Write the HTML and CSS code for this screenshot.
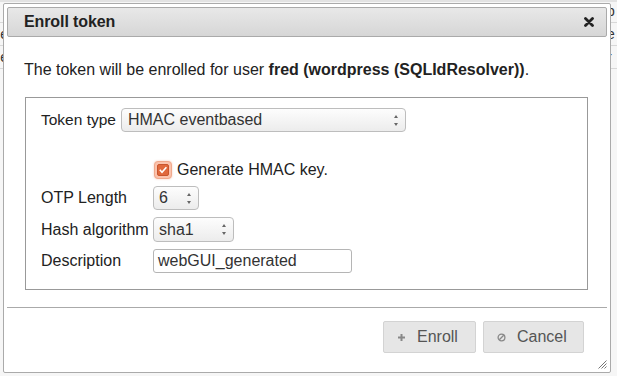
FILE: index.html
```html
<!DOCTYPE html>
<html lang="en">
  <head>
    <meta charset="UTF-8" />
    <title>Enroll token</title>
    <link rel="stylesheet" href="styles.css">
  </head>
  <body>
    <div class="backdrop">
      <div class="bg-row bg-top"><span class="bg-mid"></span><span class="bg-end">b</span></div>
      <div class="bg-row"><span class="bg-left">e</span><span class="bg-mid"></span><span class="bg-end">e</span></div>
      <div class="bg-row"><span class="bg-left">e</span><span class="bg-mid"></span><span class="bg-end">r</span></div>
    </div>

    <div class="dialog">
      <div class="titlebar">
        <span class="title">Enroll token</span>
        <button class="close" title="close">
          <svg width="10" height="10" viewBox="0 0 10 10">
            <path d="M1.5 1.5 L8.5 8.5 M8.5 1.5 L1.5 8.5" stroke="#222" stroke-width="2.8" stroke-linecap="round" />
          </svg>
        </button>
      </div>

      <div class="content">
        <p class="message">
          The token will be enrolled for user <b>fred (wordpress (SQLIdResolver))</b>.
        </p>

        <fieldset class="token-form">
          <div class="type-row">
            <label>Token type</label>
            <div class="select select-type">
              <span>HMAC eventbased</span>
              <span class="arrows"></span>
            </div>
          </div>

          <div class="form-grid">
            <span></span>
            <label class="check">
              <span class="box">
                <svg width="12" height="12" viewBox="0 0 12 12">
                  <rect x="0.5" y="0.5" width="11" height="11" rx="1.5" fill="#e0693d" stroke="#c9552d" />
                  <path d="M2.8 5.8 L5 8.2 L9.4 3.2" fill="none" stroke="#fff" stroke-width="1.6" />
                </svg>
              </span>
              Generate HMAC key.
            </label>

            <label>OTP Length</label>
            <div class="select select-otp">
              <span>6</span>
              <span class="arrows"></span>
            </div>

            <label>Hash algorithm</label>
            <div class="select select-hash">
              <span>sha1</span>
              <span class="arrows"></span>
            </div>

            <label>Description</label>
            <div class="text-input">webGUI_generated</div>
          </div>
        </fieldset>
      </div>

      <div class="buttonpane">
        <button class="btn">
          <svg class="btn-icon" width="9" height="9" viewBox="0 0 9 9">
            <path d="M4.5 1 V8 M1 4.5 H8" stroke="#888" stroke-width="2" />
          </svg>
          Enroll
        </button>
        <button class="btn btn-cancel">
          <svg class="btn-icon" width="9" height="9" viewBox="0 0 9 9">
            <circle cx="4.5" cy="4.5" r="3.4" fill="none" stroke="#888" stroke-width="1.3" />
            <path d="M2.3 6.7 L6.7 2.3" stroke="#888" stroke-width="1.3" />
          </svg>
          Cancel
        </button>
      </div>

      <svg class="resize" width="10" height="10" viewBox="0 0 10 10">
        <path d="M9.5 1.5 L1.5 9.5 M9.5 4.5 L4.5 9.5 M9.5 7.5 L7.5 9.5" stroke="#666" stroke-width="0.9" />
      </svg>
    </div>
  </body>
</html>
```

FILE: styles.css
```css
body {
  margin: 0;
  width: 617px;
  height: 376px;
  overflow: hidden;
  position: relative;
  background-color: #f6f6f6;
  font-family: "Liberation Sans", Arial, sans-serif;
  color: #222;
}

/* page behind the dialog */
.bg-row {
  display: flex;
  height: 22px;
  border-bottom: 1px solid #d8d8d8;
  font-size: 14px;
  line-height: 22px;
  color: #333;
}
.bg-top {
  height: 20px;
  border-top: 2px solid #e2e2e2;
  line-height: 18px;
}
.bg-left {
  width: 8px;
  text-align: right;
}
.bg-mid {
  flex: 1;
}
.bg-end {
  width: 10px;
}

/* dialog */
.dialog {
  position: absolute;
  left: 3px;
  top: 3px;
  width: 608px;
  height: 370px;
  box-sizing: border-box;
  padding: 3px;
  border: 1px solid #aaa;
  border-radius: 2px;
  background: #fff;
  display: flex;
  flex-direction: column;
}

.titlebar {
  height: 30px;
  box-sizing: border-box;
  border: 1px solid #aaa;
  border-radius: 2px;
  background: linear-gradient(#e8e8e8, #d6d6d6);
  display: flex;
  align-items: center;
  justify-content: space-between;
  padding: 0 12px 0 16px;
}
.title {
  font-size: 16px;
  font-weight: bold;
  letter-spacing: -0.1px;
}
.close {
  border: none;
  background: none;
  padding: 0;
  width: 10px;
  height: 10px;
  display: flex;
}

.content {
  flex: 1;
  padding: 0 17px;
}
.message {
  margin: 24px 0 0 0;
  font-size: 16px;
  line-height: 18px;
}

.token-form {
  margin: 18px 0 0 1px;
  width: 563px;
  height: 193px;
  box-sizing: border-box;
  border: 1px solid #999;
  padding: 10px 0 0 15px;
}

.type-row {
  display: flex;
  align-items: center;
  gap: 5px;
  font-size: 15.5px;
}

.form-grid {
  margin-top: 29px;
  display: grid;
  grid-template-columns: 112px auto;
  row-gap: 7px;
  align-items: center;
  justify-items: start;
  font-size: 16px;
}
.form-grid label {
  line-height: 18px;
}

.check {
  display: flex;
  align-items: center;
  gap: 5px;
  margin-left: 1px;
  height: 18px;
}
.box {
  width: 18px;
  height: 18px;
  box-sizing: border-box;
  border: 1px solid #f0a98c;
  border-radius: 4px;
  background: #fbc3ad;
  box-shadow: 0 0 2px rgba(240, 140, 100, 0.5);
  display: flex;
  align-items: center;
  justify-content: center;
}

.select {
  height: 24px;
  box-sizing: border-box;
  border: 1px solid #bdbdbd;
  border-radius: 4px;
  background: linear-gradient(#fdfdfd, #ececec);
  display: flex;
  align-items: center;
  justify-content: space-between;
  padding: 0 6px 0 5px;
  font-size: 16px;
  color: #333;
}
.select-type {
  width: 285px;
  padding-left: 6px;
}
.select-otp {
  width: 46px;
}
.select-hash {
  width: 81px;
  height: 25px;
}
.arrows {
  width: 5px;
  height: 11px;
  position: relative;
}
.arrows::before,
.arrows::after {
  content: "";
  position: absolute;
  left: 0;
  border-left: 2.5px solid transparent;
  border-right: 2.5px solid transparent;
}
.arrows::before {
  top: 0;
  border-bottom: 3px solid #666;
}
.arrows::after {
  bottom: 0;
  border-top: 3px solid #666;
}

.text-input {
  width: 199px;
  height: 24px;
  box-sizing: border-box;
  border: 1px solid #b5b5b5;
  border-radius: 3px;
  background: #fff;
  padding: 0 4px;
  font-size: 16px;
  line-height: 22px;
  color: #333;
}

.buttonpane {
  border-top: 1px solid #aaa;
  height: 62px;
  box-sizing: border-box;
  padding: 13px 23px 0 0;
  display: flex;
  justify-content: flex-end;
  align-items: flex-start;
  gap: 7px;
}
.btn {
  height: 32px;
  width: 93px;
  border: 1px solid #d3d3d3;
  border-radius: 2px;
  background: #e6e6e6;
  color: #555;
  font-family: "Liberation Sans", Arial, sans-serif;
  font-size: 16px;
  display: flex;
  align-items: center;
  padding: 0 0 0 13px;
}
.btn-cancel {
  width: 101px;
}
.btn-icon {
  margin-right: 11px;
}

.resize {
  position: absolute;
  right: 3px;
  bottom: 3px;
}
```
